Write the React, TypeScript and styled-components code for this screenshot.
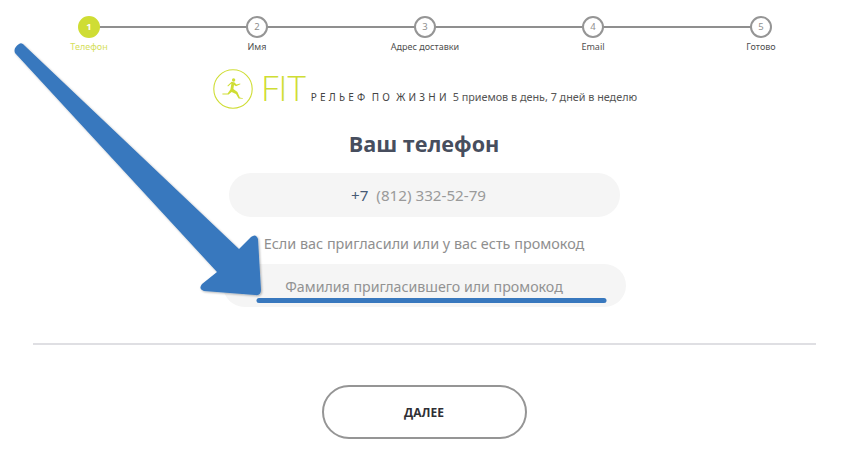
import React from "react";
import styled, { createGlobalStyle } from "styled-components";

const Global = createGlobalStyle`
  html, body { margin: 0; padding: 0; background: #fff; }
  body { font-family: "Noto Sans", "Open Sans", sans-serif; }
`;

const Page = styled.div`
  position: relative;
  width: 850px;
  height: 454px;
  overflow: hidden;
  display: flex;
  flex-direction: column;
  align-items: center;
`;

const Steps = styled.ol`
  list-style: none;
  margin: 16px 0 0;
  padding: 0;
  width: 840px;
  display: grid;
  grid-template-columns: repeat(5, 168px);
`;

const Step = styled.li`
  position: relative;
  display: flex;
  flex-direction: column;
  align-items: center;
  &:not(:last-child)::after {
    content: "";
    position: absolute;
    top: 10px;
    left: 84px;
    width: 168px;
    height: 2px;
    background: #8f8f8f;
  }
`;

const Dot = styled.span<{ $active?: boolean }>`
  position: relative;
  z-index: 1;
  box-sizing: border-box;
  width: 22px;
  height: 22px;
  border-radius: 50%;
  border: 2px solid ${(p) => (p.$active ? "#cfdd34" : "#959595")};
  background: ${(p) => (p.$active ? "#cfdd34" : "#fff")};
  color: ${(p) => (p.$active ? "#fff" : "#8f8f8f")};
  font-size: 9.5px;
  font-weight: ${(p) => (p.$active ? 700 : 400)};
  line-height: 17px;
  text-align: center;
`;

const StepLabel = styled.span<{ $active?: boolean }>`
  margin-top: 2px;
  font-size: 9px;
  line-height: 14px;
  white-space: nowrap;
  color: ${(p) => (p.$active ? "#d5e05c" : "#4f4f4f")};
`;

const Main = styled.main`
  width: 848px;
  margin-right: 2px;
  display: flex;
  flex-direction: column;
  align-items: center;
`;

const Brand = styled.div`
  margin-top: 15px;
  width: 424px;
  padding-left: 1px;
  box-sizing: border-box;
  display: flex;
  align-items: flex-end;
  height: 40px;
`;

const BrandIcon = styled.svg`
  width: 40px;
  height: 40px;
  flex: none;
`;

const BrandName = styled.span`
  margin-left: 8px;
  font-family: "Open Sans", sans-serif;
  font-weight: 300;
  font-size: 35px;
  line-height: 40px;
  margin-bottom: 1px;
  color: #cfdd34;
`;

const Tagline = styled.span`
  margin-left: 5px;
  font-size: 10px;
  letter-spacing: 3.2px;
  word-spacing: -2.5px;
  line-height: 14px;
  margin-bottom: 5px;
  color: #444;
  white-space: nowrap;
`;

const Slogan = styled.span`
  margin-left: 3px;
  font-size: 10.8px;
  line-height: 14px;
  margin-bottom: 5px;
  color: #555;
  white-space: nowrap;
`;

const Title = styled.h1`
  margin: 17px 0 0;
  font-family: "Open Sans", sans-serif;
  font-size: 21.6px;
  font-weight: 700;
  line-height: 36px;
  color: #474e5e;
`;

const PhoneField = styled.div`
  margin-top: 11px;
  width: 391px;
  height: 44px;
  padding-right: 11px;
  box-sizing: border-box;
  border-radius: 22px;
  background: #f5f5f5;
  display: flex;
  align-items: center;
  justify-content: center;
  gap: 8px;
  font-size: 15.2px;
  color: #9a9a9a;
`;

const Code = styled.span`
  color: #475a75;
`;

const Hint = styled.p`
  margin: 16px 0 0;
  font-size: 14.4px;
  line-height: 22px;
  color: #8f8f8f;
`;

const PromoField = styled.div`
  margin-top: 9px;
  width: 403px;
  height: 43px;
  border-radius: 22px;
  background: #f5f5f5;
  display: flex;
  align-items: center;
  justify-content: center;
  font-size: 14.2px;
  padding-top: 2px;
  box-sizing: border-box;
  color: #929292;
`;

const Divider = styled.hr`
  margin: 36px 0 0;
  width: 783px;
  height: 2px;
  border: 0;
  background: #dfdfe3;
`;

const NextButton = styled.button`
  margin-top: 40px;
  width: 205px;
  height: 54px;
  box-sizing: border-box;
  border: 2px solid #959595;
  border-radius: 27px;
  background: #fff;
  font-family: "Open Sans", sans-serif;
  font-size: 12px;
  font-weight: 700;
  color: #2f2f35;
`;

const Annotation = styled.svg`
  position: absolute;
  left: 0;
  top: 0;
  width: 850px;
  height: 454px;
  pointer-events: none;
`;

const steps = ["Телефон", "Имя", "Адрес доставки", "Email", "Готово"];

export default function App() {
  return (
    <Page>
      <Global />
      <Steps>
        {steps.map((label, i) => (
          <Step key={label}>
            <Dot $active={i === 0}>{i + 1}</Dot>
            <StepLabel $active={i === 0}>{label}</StepLabel>
          </Step>
        ))}
      </Steps>
      <Main>
        <Brand>
          <BrandIcon viewBox="0 0 40 40">
            <circle cx="20" cy="20" r="19.2" fill="none" stroke="#cfdd34" strokeWidth="1.1" />
            <circle cx="20.6" cy="11" r="1.7" fill="#cfdd34" />
            <path
              d="M9.4 24.6 L14.6 24.4 L17.4 20.4 L18.4 14.6 L15 17.4 L14.4 16.8 L18.6 12.8 L21.6 13.4 L23.4 15.6 L27.2 14.4 L27.4 15.2 L23 17.2 L21 16 L20.4 20 L24.4 23 L26.8 28.6 L30 29.2 L30 29.8 L25.6 29.6 L23 25 L18.6 23 L15.6 25.6 L9.4 25.6 Z"
              fill="#cfdd34"
            />
          </BrandIcon>
          <BrandName>FIT</BrandName>
          <Tagline>РЕЛЬЕФ ПО ЖИЗНИ</Tagline>
          <Slogan>5 приемов в день, 7 дней в неделю</Slogan>
        </Brand>
        <Title>Ваш телефон</Title>
        <PhoneField>
          <Code>+7</Code>
          <span>(812) 332-52-79</span>
        </PhoneField>
        <Hint>Если вас пригласили или у вас есть промокод</Hint>
        <PromoField>Фамилия пригласившего или промокод</PromoField>
        <Divider />
        <NextButton>ДАЛЕЕ</NextButton>
      </Main>
      <Annotation viewBox="0 0 850 454">
        <defs>
          <filter id="sh" x="-10%" y="-10%" width="120%" height="120%">
            <feDropShadow dx="1" dy="1" stdDeviation="1" floodColor="#000" floodOpacity="0.3" />
          </filter>
        </defs>
        <path
          d="M19 44 Q22 42 25 46 L239 249 L251 237 Q256 233 258 239 L261 290 Q261 296 255 295 L204 291 Q198 289 202 284 L217 272 L15 53 Q13 48 19 44 Z"
          fill="#3878be"
          filter="url(#sh)"
        />
        <line x1="259" y1="300.5" x2="604" y2="300.5" stroke="#3878be" strokeWidth="5" strokeLinecap="round" />
      </Annotation>
    </Page>
  );
}
